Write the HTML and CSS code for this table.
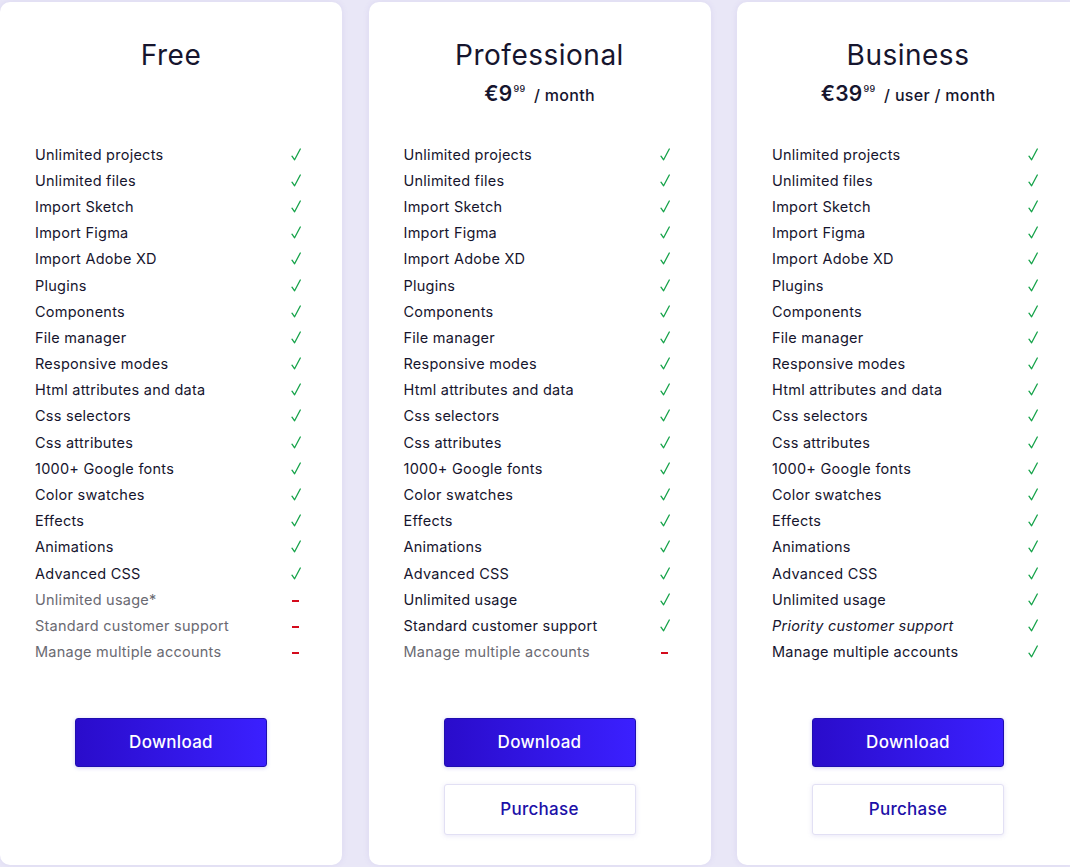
FILE: index.html
```html
<!DOCTYPE html>
<html>
<head>
<meta charset="utf-8">
<link rel="stylesheet" href="styles.css">
</head>
<body>
<div class="plans">
  <section class="card">
    <div class="head">
      <h2 class="title">Free</h2>
      <div class="price"></div>
    </div>
    <ul class="features">
      <li><span>Unlimited projects</span><i class="ok"></i></li>
      <li><span>Unlimited files</span><i class="ok"></i></li>
      <li><span>Import Sketch</span><i class="ok"></i></li>
      <li><span>Import Figma</span><i class="ok"></i></li>
      <li><span>Import Adobe XD</span><i class="ok"></i></li>
      <li><span>Plugins</span><i class="ok"></i></li>
      <li><span>Components</span><i class="ok"></i></li>
      <li><span>File manager</span><i class="ok"></i></li>
      <li><span>Responsive modes</span><i class="ok"></i></li>
      <li><span>Html attributes and data</span><i class="ok"></i></li>
      <li><span>Css selectors</span><i class="ok"></i></li>
      <li><span>Css attributes</span><i class="ok"></i></li>
      <li><span>1000+ Google fonts</span><i class="ok"></i></li>
      <li><span>Color swatches</span><i class="ok"></i></li>
      <li><span>Effects</span><i class="ok"></i></li>
      <li><span>Animations</span><i class="ok"></i></li>
      <li><span>Advanced CSS</span><i class="ok"></i></li>
      <li class="off"><span>Unlimited usage*</span><i class="no"></i></li>
      <li class="off"><span>Standard customer support</span><i class="no"></i></li>
      <li class="off"><span>Manage multiple accounts</span><i class="no"></i></li>
    </ul>
    <div class="actions">
      <button class="btn primary">Download</button>
    </div>
  </section>

  <section class="card">
    <div class="head">
      <h2 class="title">Professional</h2>
      <div class="price"><b>€9<sup>99</sup></b> / month</div>
    </div>
    <ul class="features">
      <li><span>Unlimited projects</span><i class="ok"></i></li>
      <li><span>Unlimited files</span><i class="ok"></i></li>
      <li><span>Import Sketch</span><i class="ok"></i></li>
      <li><span>Import Figma</span><i class="ok"></i></li>
      <li><span>Import Adobe XD</span><i class="ok"></i></li>
      <li><span>Plugins</span><i class="ok"></i></li>
      <li><span>Components</span><i class="ok"></i></li>
      <li><span>File manager</span><i class="ok"></i></li>
      <li><span>Responsive modes</span><i class="ok"></i></li>
      <li><span>Html attributes and data</span><i class="ok"></i></li>
      <li><span>Css selectors</span><i class="ok"></i></li>
      <li><span>Css attributes</span><i class="ok"></i></li>
      <li><span>1000+ Google fonts</span><i class="ok"></i></li>
      <li><span>Color swatches</span><i class="ok"></i></li>
      <li><span>Effects</span><i class="ok"></i></li>
      <li><span>Animations</span><i class="ok"></i></li>
      <li><span>Advanced CSS</span><i class="ok"></i></li>
      <li><span>Unlimited usage</span><i class="ok"></i></li>
      <li><span>Standard customer support</span><i class="ok"></i></li>
      <li class="off"><span>Manage multiple accounts</span><i class="no"></i></li>
    </ul>
    <div class="actions">
      <button class="btn primary">Download</button>
      <button class="btn secondary">Purchase</button>
    </div>
  </section>

  <section class="card">
    <div class="head">
      <h2 class="title">Business</h2>
      <div class="price"><b>€39<sup>99</sup></b> / user / month</div>
    </div>
    <ul class="features">
      <li><span>Unlimited projects</span><i class="ok"></i></li>
      <li><span>Unlimited files</span><i class="ok"></i></li>
      <li><span>Import Sketch</span><i class="ok"></i></li>
      <li><span>Import Figma</span><i class="ok"></i></li>
      <li><span>Import Adobe XD</span><i class="ok"></i></li>
      <li><span>Plugins</span><i class="ok"></i></li>
      <li><span>Components</span><i class="ok"></i></li>
      <li><span>File manager</span><i class="ok"></i></li>
      <li><span>Responsive modes</span><i class="ok"></i></li>
      <li><span>Html attributes and data</span><i class="ok"></i></li>
      <li><span>Css selectors</span><i class="ok"></i></li>
      <li><span>Css attributes</span><i class="ok"></i></li>
      <li><span>1000+ Google fonts</span><i class="ok"></i></li>
      <li><span>Color swatches</span><i class="ok"></i></li>
      <li><span>Effects</span><i class="ok"></i></li>
      <li><span>Animations</span><i class="ok"></i></li>
      <li><span>Advanced CSS</span><i class="ok"></i></li>
      <li><span>Unlimited usage</span><i class="ok"></i></li>
      <li><span class="em">Priority customer support</span><i class="ok"></i></li>
      <li><span>Manage multiple accounts</span><i class="ok"></i></li>
    </ul>
    <div class="actions">
      <button class="btn primary">Download</button>
      <button class="btn secondary">Purchase</button>
    </div>
  </section>
</div>
</body>
</html>
```

FILE: styles.css
```css
html, body {
  margin: 0;
  padding: 0;
  background: #e9e7f7;
  height: 100%;
  overflow: hidden;
}
body {
  font-family: "Inter", "Noto Sans", sans-serif;
  color: #16152e;
}
.plans {
  display: flex;
  gap: 26.5px;
  padding-top: 2px;
  width: 1100px;
}
.card {
  flex: 0 0 342px;
  height: 863px;
  background: #fff;
  border-radius: 10px;
  box-shadow: 0 0 6px rgba(120, 110, 200, 0.12);
  box-sizing: border-box;
  padding: 35px 41px 0 35px;
  display: flex;
  flex-direction: column;
}
.head {
  height: 104px;
  text-align: center;
  margin-right: -6px;
}
.title {
  margin: 0;
  font-size: 28px;
  font-weight: 400;
  line-height: 36px;
  letter-spacing: 0.5px;
}
.price {
  margin-top: 2px;
  height: 28px;
  line-height: 28px;
  font-size: 16px;
  font-weight: 500;
  letter-spacing: 0.3px;
}
.price b {
  font-size: 21px;
  font-weight: 600;
  margin-right: 4px;
}
.price sup {
  font-size: 9px;
  font-weight: 500;
  vertical-align: 9px;
  margin-left: 1px;
}
.features {
  list-style: none;
  margin: 0;
  padding: 0;
}
.features li {
  display: flex;
  justify-content: space-between;
  align-items: center;
  height: 26.2px;
  font-size: 14.5px;
  letter-spacing: 0.25px;
}
.features li.off span {
  color: #6a6a72;
}
.features .em {
  font-style: italic;
}
.ok {
  display: block;
  width: 10px;
  height: 13px;
  background: url("data:image/svg+xml,%3Csvg xmlns='http://www.w3.org/2000/svg' width='10' height='13' viewBox='0 0 10 13'%3E%3Cpath d='M1 8.2 L3.6 11.8 L9.3 1' fill='none' stroke='%2316a34a' stroke-width='1.3' stroke-linecap='round' stroke-linejoin='round'/%3E%3C/svg%3E") no-repeat center;
}
.no {
  display: block;
  width: 7px;
  height: 2px;
  margin-right: 2px;
  margin-top: 3px;
  background: #d40a1c;
}
.actions {
  margin-top: 53px;
  margin-right: -6px;
  display: flex;
  flex-direction: column;
  align-items: center;
  gap: 17px;
}
.btn {
  width: 192px;
  height: 49px;
  border-radius: 3px;
  font-family: inherit;
  font-size: 17px;
  font-weight: 500;
  letter-spacing: 0.3px;
  cursor: pointer;
}
.primary {
  color: #fff;
  background: linear-gradient(90deg, #2a0ccb 0%, #3b20ff 100%);
  border: 1px solid #1f0eb0;
  box-shadow: 0 1px 4px rgba(40, 20, 200, 0.2);
}
.secondary {
  height: 51px;
  color: #1c10a8;
  background: #fff;
  border: 1px solid #e2e0f4;
  box-shadow: 0 1px 5px rgba(100, 90, 200, 0.15);
}
```
